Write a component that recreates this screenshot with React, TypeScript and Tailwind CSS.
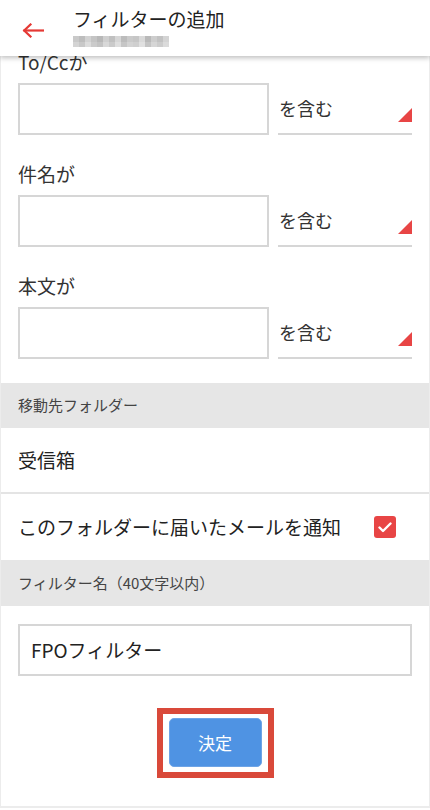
import React from "react";

const font = { fontFamily: '"Noto Sans CJK JP", "Noto Sans", sans-serif' };

function Mosaic() {
  const shades = [
    "#c9c9c9", "#bdbdbd", "#d2d2d2", "#c4c4c4", "#b8b8b8", "#cfcfcf", "#c0c0c0", "#d6d6d6",
    "#bcbcbc", "#cacaca", "#c6c6c6", "#d9d9d9", "#b9b9b9", "#cdcdcd", "#c2c2c2", "#d4d4d4",
  ];
  const shades2 = [
    "#d4d4d4", "#c8c8c8", "#dcdcdc", "#cbcbcb", "#c3c3c3", "#d8d8d8", "#cacaca", "#dedede",
    "#c6c6c6", "#d3d3d3", "#cfcfcf", "#e0e0e0", "#c4c4c4", "#d6d6d6", "#cccccc", "#dbdbdb",
  ];
  return (
    <svg width="96" height="11" viewBox="0 0 96 11" className="block">
      {shades.map((c, i) => (
        <rect key={"a" + i} x={i * 6} y={0} width={6} height={6} fill={c} />
      ))}
      {shades2.map((c, i) => (
        <rect key={"b" + i} x={i * 6} y={6} width={6} height={5} fill={c} />
      ))}
    </svg>
  );
}

function Field({ label, last }: { label: string; last?: boolean }) {
  return (
    <div className={last ? "pb-[24px]" : "pb-[25px]"}>
      <div className="h-[28px] px-[17px] text-[19px] leading-[28px] text-[#333]">{label}</div>
      <div className="mt-[7px] flex px-[17px]">
        <div className="h-[52px] w-[251px] border-2 border-[#d6d6d6] bg-white" />
        <div className="relative ml-[9px] h-[52px] flex-1 border-b-2 border-[#d6d6d6]">
          <span className="absolute left-[1px] top-[12px] text-[18px] leading-[26px] text-[#333]">を含む</span>
          <svg className="absolute right-0 top-[25px]" width="14" height="14" viewBox="0 0 14 14">
            <polygon points="14,0 14,14 0,14" fill="#e84545" />
          </svg>
        </div>
      </div>
    </div>
  );
}

export default function App() {
  return (
    <div style={font} className="relative h-[810px] w-[430px] overflow-hidden bg-white">
      <div className="flex h-[808px] flex-col border-x border-b-2 border-[#ececec]">
        {/* header */}
        <div className="absolute left-0 right-0 top-0 z-10 flex h-[56px] items-start bg-white shadow-[0_2px_5px_rgba(0,0,0,0.25)]">
          <div className="ml-[22px] mt-[23px]">
            <svg width="22" height="15" viewBox="0 0 22 15" fill="none" stroke="#e53935" strokeWidth="2.2" strokeLinecap="square">
              <path d="M21 7.5H2.5" />
              <path d="M8.5 1.5L2.2 7.5L8.5 13.5" />
            </svg>
          </div>
          <div className="ml-[29px] flex flex-col">
            <div className="mt-[6px] text-[19px] leading-[26px] text-[#222]">フィルターの追加</div>
            <div className="mt-[4px]">
              <Mosaic />
            </div>
          </div>
        </div>

        <div className="pt-[48px]">
          <Field label="To/Ccか" />
          <Field label="件名が" />
          <Field label="本文が" last />
        </div>

        <div className="flex h-[45px] items-center bg-[#e6e6e6] px-[17px] text-[15px] text-[#444]">移動先フォルダー</div>
        <div className="flex h-[66px] items-center border-b-2 border-[#e4e4e4] px-[17px] text-[19px] text-[#222]">受信箱</div>
        <div className="flex h-[66px] items-center justify-between pl-[17px] pr-[33px] text-[19px] text-[#222]">
          <span>このフォルダーに届いたメールを通知</span>
          <div className="flex h-[22px] w-[22px] items-center justify-center rounded-[3px] bg-[#e84545]">
            <svg width="14" height="11" viewBox="0 0 14 11" fill="none" stroke="white" strokeWidth="2.4" strokeLinecap="round" strokeLinejoin="round">
              <path d="M1.5 5.5L5 9L12.5 1.5" />
            </svg>
          </div>
        </div>
        <div className="flex h-[46px] items-center bg-[#e6e6e6] px-[17px] text-[15px] text-[#444]">フィルター名（40文字以内）</div>

        <div className="px-[17px] pt-[18px]">
          <div className="flex h-[52px] items-center border-2 border-[#d6d6d6] px-[11px] text-[19px] text-[#222]">FPOフィルター</div>
        </div>

        <div className="flex justify-center pt-[32px]">
          <div className="border-[6px] border-[#d9493a] px-[6px] pb-[5px] pt-[4px]">
            <button className="flex h-[49px] w-[93px] items-center justify-center rounded-[5px] border border-[#6ea4e6] bg-[#4f93e3] text-[17px] text-white">
              決定
            </button>
          </div>
        </div>
      </div>
    </div>
  );
}
